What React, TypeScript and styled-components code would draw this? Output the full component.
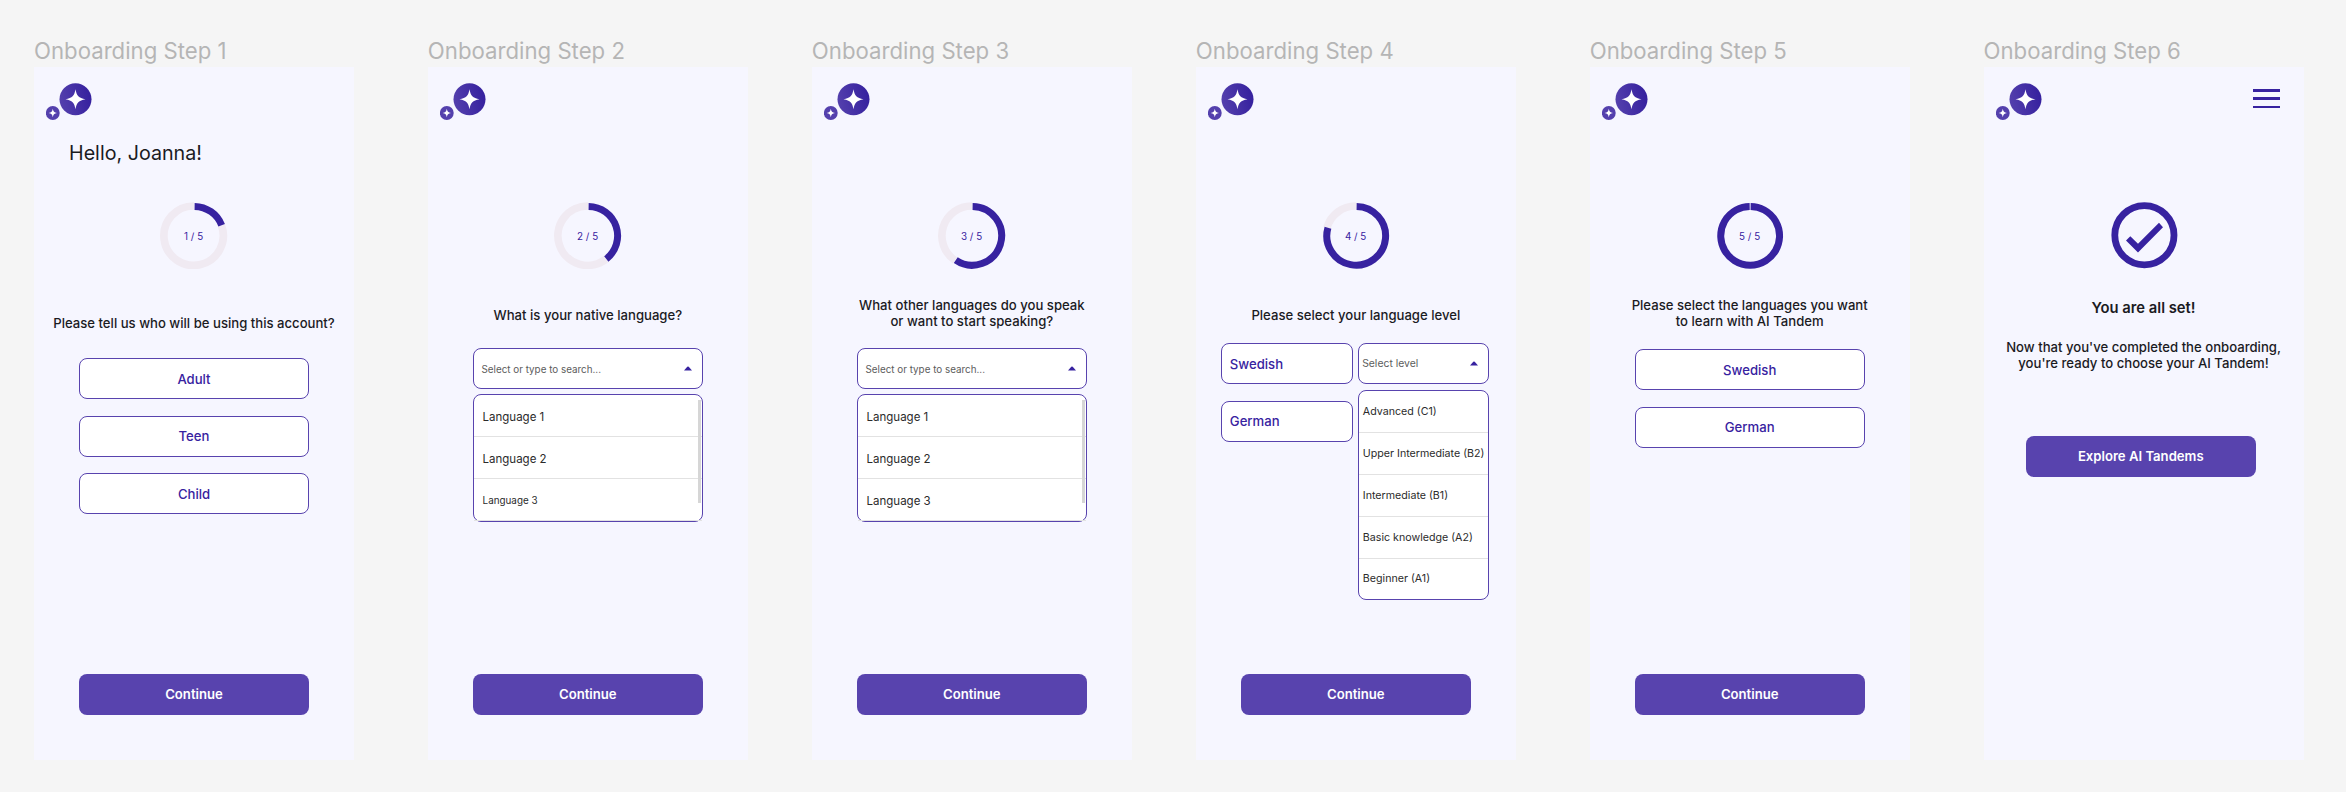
import React from 'react';
import styled, { createGlobalStyle, css } from 'styled-components';

const color = {
  canvas: '#f5f5f5',
  frame: '#f6f6ff',
  title: '#b5b5b5',
  ink: '#1b1b1f',
  primary: '#3722a0',
  accent: '#5843ae',
  track: '#f0eaf2',
  muted: '#5c5c5c',
  line: '#e2e2e2',
};

const GlobalStyle = createGlobalStyle`
  * { box-sizing: border-box; }
  body {
    margin: 0;
    background: ${color.canvas};
    font-family: Inter, 'Liberation Sans', sans-serif;
    color: ${color.ink};
  }
`;

const Canvas = styled.main`
  display: flex;
  height: 792px;
  padding: 36px 0 0 34px;
  overflow: hidden;
`;

const Artboard = styled.section<{ $gap: number }>`
  flex: none;
  width: 320px;
  margin-right: ${(p) => p.$gap}px;
`;

const ArtboardTitle = styled.h2`
  height: 31px;
  margin: 0;
  font-size: 22.2px;
  font-weight: 400;
  line-height: 30px;
  color: ${color.title};
  white-space: nowrap;
`;

const Screen = styled.div`
  display: flex;
  flex-direction: column;
  height: 692.5px;
  background: ${color.frame};
`;

const Header = styled.header`
  display: flex;
  justify-content: space-between;
  height: 72px;
  padding: 16px 24px 0 12px;
`;

const MenuButton = styled.div`
  display: flex;
  flex-direction: column;
  gap: 5.8px;
  width: 26.7px;
  padding-top: 6.2px;
`;

const MenuBar = styled.span`
  height: 2.46px;
  background: ${color.primary};
`;

const Greeting = styled.div`
  height: 62.5px;
  padding: 1px 0 0 35px;
  font-size: 19.7px;
  line-height: 26px;
`;

const RingArea = styled.div`
  display: flex;
  justify-content: center;
  height: 67px;
`;

const Prompt = styled.p<{ $height: number; $gap: number }>`
  display: flex;
  align-items: flex-end;
  justify-content: center;
  height: ${(p) => p.$height}px;
  margin: 0;
  padding-bottom: ${(p) => p.$gap}px;
  font-size: 13.13px;
  font-weight: 500;
  line-height: 15.75px;
  text-align: center;
  white-space: pre-line;
`;

const Stack = styled.div<{ $gap: number }>`
  display: flex;
  flex-direction: column;
  align-items: center;
  gap: ${(p) => p.$gap}px;
`;

const field = css`
  width: 229.7px;
  height: 41px;
  border: 1px solid ${color.accent};
  border-radius: 8px;
  background: #fff;
`;

const ChoiceButton = styled.button<{ $compact?: boolean }>`
  ${field}
  font: 500 13.13px/16px Inter, sans-serif;
  color: ${color.primary};
  ${(p) =>
    p.$compact &&
    css`
      width: 131.3px;
      padding: 0 7.5px;
      text-align: left;
    `}
`;

const PrimaryButton = styled.button`
  width: 229.7px;
  height: 41px;
  border: 0;
  border-radius: 8px;
  background: ${color.accent};
  font: 600 13.13px/16px Inter, sans-serif;
  color: #fff;
`;

const Select = styled.div<{ $compact?: boolean }>`
  ${field}
  display: flex;
  align-items: center;
  justify-content: space-between;
  padding: 0 10px 0 7.5px;
  font-size: 9.85px;
  color: ${color.muted};
  ${(p) => p.$compact && css`width: 131.3px; padding-left: 3.5px; font-size: 10.4px;`}
`;

const OptionList = styled.ul<{ $compact?: boolean }>`
  ${field}
  position: relative;
  height: auto;
  margin: 0;
  padding: 0;
  list-style: none;
  ${(p) => p.$compact && css`width: 131.3px;`}
`;

const Option = styled.li<{ $size: number; $inset: number }>`
  display: flex;
  align-items: center;
  height: 42px;
  padding-top: ${(p) => (p.$size > 11 ? 2 : 0)}px;
  padding-left: ${(p) => p.$inset}px;
  font-size: ${(p) => p.$size}px;
  white-space: nowrap;
  color: #2b2b2b;
  &:not(:last-child) { border-bottom: 1px solid ${color.line}; }
  &:last-child { height: 40px; }
`;

const ScrollThumb = styled.span`
  position: absolute;
  top: 5px;
  right: 1px;
  width: 3px;
  height: 103px;
  background: #d6d6d6;
`;

const LevelGrid = styled.div`
  display: grid;
  grid-template-columns: 131.3px 131.3px;
  justify-content: center;
  gap: 5px;
  padding-right: 1.4px;
`;

const LevelColumn = styled.div<{ $gap: number }>`
  display: flex;
  flex-direction: column;
  gap: ${(p) => p.$gap}px;
`;

const Footer = styled.footer`
  display: flex;
  justify-content: center;
  margin-top: auto;
  padding-bottom: 44.9px;
`;

const DoneTitle = styled.h3`
  height: 18px;
  margin: 30px 0 0;
  font-size: 14.77px;
  font-weight: 600;
  line-height: 18px;
  text-align: center;
`;

const DoneText = styled.p`
  margin: 23.4px 0 0;
  font-size: 13.13px;
  font-weight: 500;
  line-height: 15.75px;
  text-align: center;
  white-space: pre-line;
`;

const DoneAction = styled.div`
  padding: 64.6px 0 0 42.4px;
`;

function Logo({ id }: { id: string }) {
  return (
    <svg width="46" height="38" viewBox="0 0 46 38">
      <defs>
        <linearGradient id={id} x1="0" y1="0.6" x2="1" y2="0.4">
          <stop offset="0" stopColor="#5440ad" />
          <stop offset="1" stopColor="#35209e" />
        </linearGradient>
      </defs>
      <circle cx="29.5" cy="16.3" r="16" fill={`url(#${id})`} />
      <path d="M29.5 6.3C30.7 13 32.6 15 39.5 16.3C32.6 17.6 30.7 19.6 29.5 26.3C28.3 19.6 26.4 17.6 19.5 16.3C26.4 15 28.3 13 29.5 6.3Z" fill="#fff" />
      <circle cx="6.8" cy="30" r="6.9" fill="#5440ad" />
      <path d="M6.8 25.8C7.3 28.6 8.1 29.5 11 30C8.1 30.5 7.3 31.4 6.8 34.2C6.3 31.4 5.5 30.5 2.6 30C5.5 29.5 6.3 28.6 6.8 25.8Z" fill="#fff" />
    </svg>
  );
}

function arc(cx: number, cy: number, r: number, from: number, to: number) {
  const point = (deg: number) => {
    const a = (deg * Math.PI) / 180;
    return `${(cx + r * Math.sin(a)).toFixed(2)} ${(cy - r * Math.cos(a)).toFixed(2)}`;
  };
  return `M${point(from)}A${r} ${r} 0 ${to - from > 180 ? 1 : 0} 1 ${point(to)}`;
}

const stepEnd = [0, 69, 142, 214, 286, 359];

function ProgressRing({ step }: { step: number }) {
  const end = stepEnd[step];
  return (
    <svg width="68" height="67" viewBox="0 0 68 67" fill="none">
      {step < 5 && <path d={arc(33.6, 33.7, 29.7, end, 361)} stroke={color.track} strokeWidth="7.7" />}
      <path d={arc(34.2, 33.8, 29.4, 0.8, end)} stroke={color.primary} strokeWidth="7" />
      <text x="33.6" y="37.5" textAnchor="middle" fontSize="9.85" fontFamily="Inter, sans-serif" fill={color.primary}>
        {step} / 5
      </text>
    </svg>
  );
}

function CheckRing() {
  return (
    <svg width="68" height="67" viewBox="0 0 68 67" fill="none">
      <circle cx="34.4" cy="33.2" r="29.6" stroke={color.primary} strokeWidth="6.8" />
      <path d="M16 38.5L20.3 34.2L28 41.8L49 20.8L53 25.2L28 50.5Z" fill={color.primary} />
    </svg>
  );
}

function Caret() {
  return (
    <svg width="8" height="5" viewBox="0 0 8 5">
      <path d="M0 4.6L3.3 0.8Q4 0.1 4.7 0.8L8 4.6Z" fill={color.primary} />
    </svg>
  );
}

interface StepProps {
  step: number;
  gap: number;
  greeting?: string;
  menu?: boolean;
  children: React.ReactNode;
}

function Step({ step, gap, greeting, menu, children }: StepProps) {
  return (
    <Artboard $gap={gap}>
      <ArtboardTitle>Onboarding Step {step}</ArtboardTitle>
      <Screen>
        <Header>
          <Logo id={`logo-${step}`} />
          {menu && (
            <MenuButton>
              <MenuBar />
              <MenuBar />
              <MenuBar />
            </MenuButton>
          )}
        </Header>
        <Greeting>{greeting}</Greeting>
        <RingArea>{step < 6 ? <ProgressRing step={step} /> : <CheckRing />}</RingArea>
        {children}
        {step < 6 && (
          <Footer>
            <PrimaryButton>Continue</PrimaryButton>
          </Footer>
        )}
      </Screen>
    </Artboard>
  );
}

function LanguagePicker({ sizes }: { sizes: number[] }) {
  return (
    <Stack $gap={5}>
      <Select>
        Select or type to search...
        <Caret />
      </Select>
      <OptionList>
        {sizes.map((size, i) => (
          <Option key={i} $size={size} $inset={8.6}>
            Language {i + 1}
          </Option>
        ))}
        <ScrollThumb />
      </OptionList>
    </Stack>
  );
}

const levels = ['Advanced (C1)', 'Upper Intermediate (B2)', 'Intermediate (B1)', 'Basic knowledge (A2)', 'Beginner (A1)'];

export default function App() {
  return (
    <>
      <GlobalStyle />
      <Canvas>
        <Step step={1} gap={73.85} greeting="Hello, Joanna!">
          <Prompt $height={89.9} $gap={27}>Please tell us who will be using this account?</Prompt>
          <Stack $gap={16.4}>
            <ChoiceButton>Adult</ChoiceButton>
            <ChoiceButton>Teen</ChoiceButton>
            <ChoiceButton>Child</ChoiceButton>
          </Stack>
        </Step>
        <Step step={2} gap={64}>
          <Prompt $height={79.8} $gap={24.6}>What is your native language?</Prompt>
          <LanguagePicker sizes={[11.49, 11.49, 9.85]} />
        </Step>
        <Step step={3} gap={64}>
          <Prompt $height={79.8} $gap={18.8}>{'What other languages do you speak\nor want to start speaking?'}</Prompt>
          <LanguagePicker sizes={[11.49, 11.49, 11.49]} />
        </Step>
        <Step step={4} gap={73.85}>
          <Prompt $height={74.9} $gap={19.6}>Please select your language level</Prompt>
          <LevelGrid>
            <LevelColumn $gap={16.4}>
              <ChoiceButton $compact>Swedish</ChoiceButton>
              <ChoiceButton $compact>German</ChoiceButton>
            </LevelColumn>
            <LevelColumn $gap={5.2}>
              <Select $compact>
                Select level
                <Caret />
              </Select>
              <OptionList $compact>
                {levels.map((level) => (
                  <Option key={level} $size={10.67} $inset={4.2}>
                    {level}
                  </Option>
                ))}
              </OptionList>
            </LevelColumn>
          </LevelGrid>
        </Step>
        <Step step={5} gap={73.85}>
          <Prompt $height={80.6} $gap={19.6}>{'Please select the languages you want\nto learn with AI Tandem'}</Prompt>
          <Stack $gap={16.6}>
            <ChoiceButton>Swedish</ChoiceButton>
            <ChoiceButton>German</ChoiceButton>
          </Stack>
        </Step>
        <Step step={6} gap={0} menu>
          <DoneTitle>You are all set!</DoneTitle>
          <DoneText>{"Now that you've completed the onboarding,\nyou're ready to choose your AI Tandem!"}</DoneText>
          <DoneAction>
            <PrimaryButton>Explore AI Tandems</PrimaryButton>
          </DoneAction>
        </Step>
      </Canvas>
    </>
  );
}
